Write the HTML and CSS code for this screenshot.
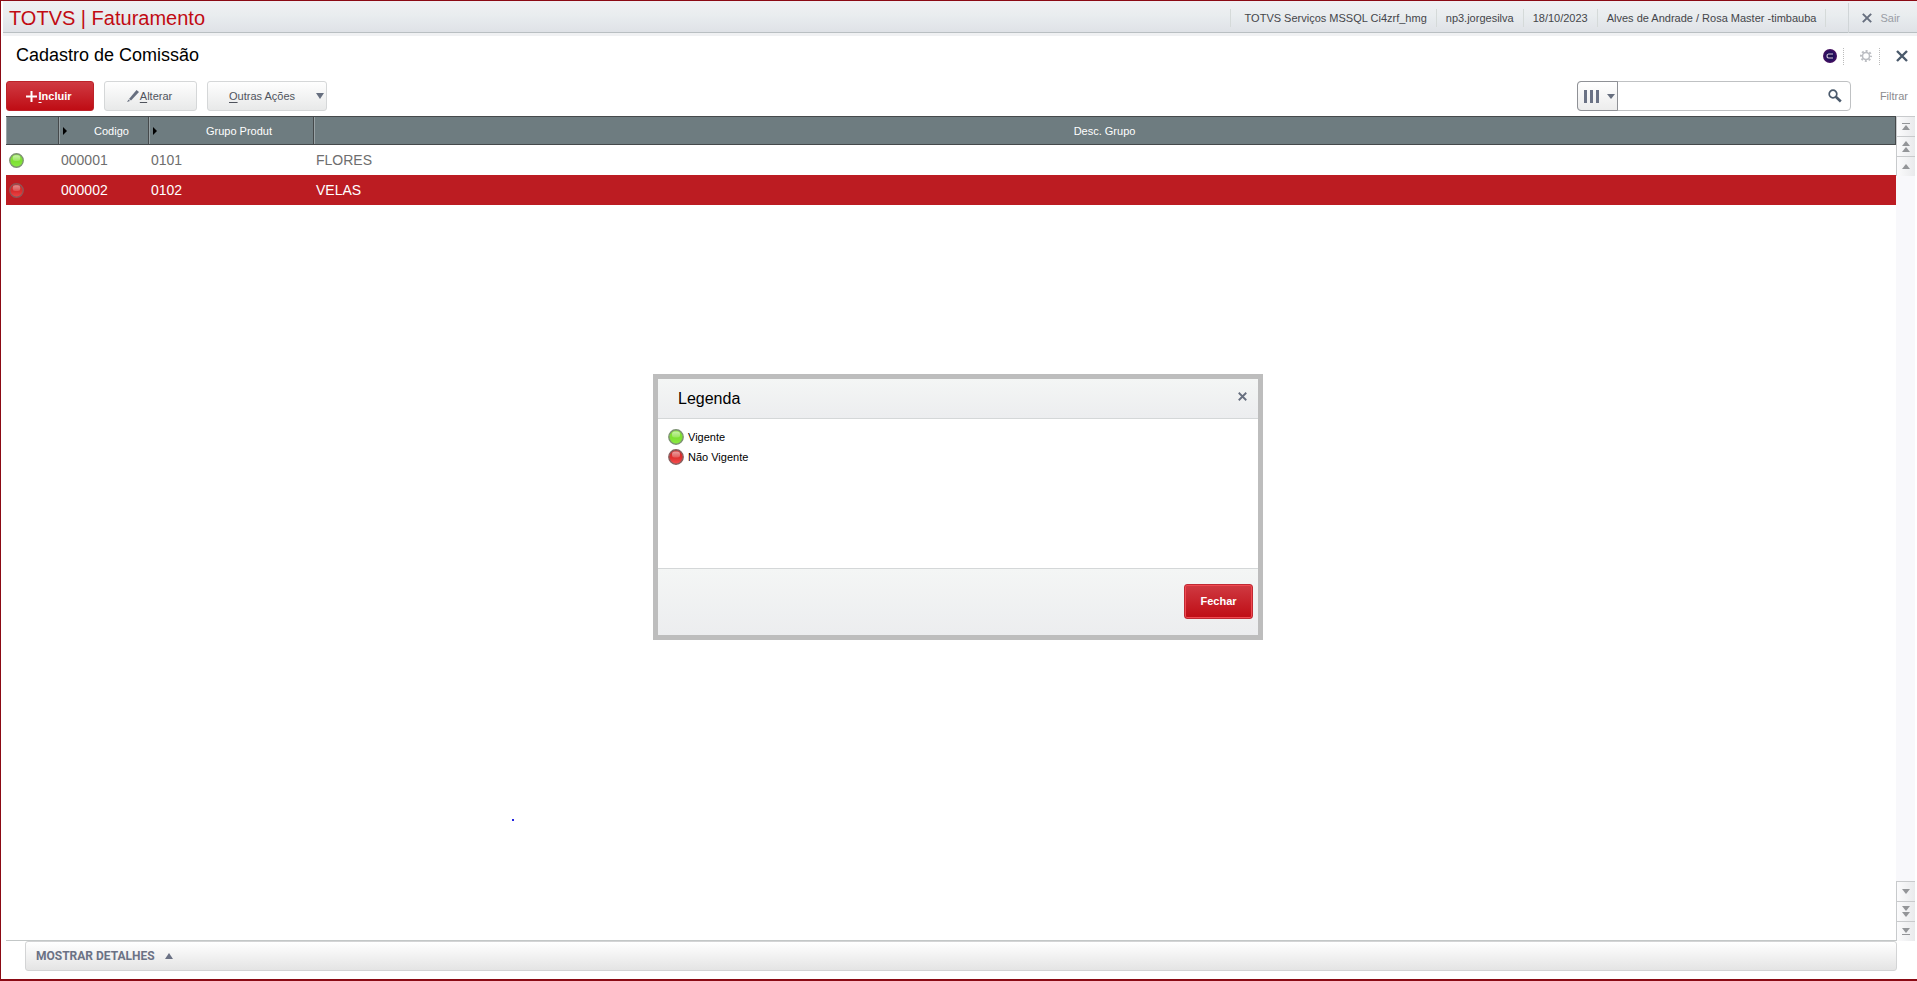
FILE: index.html
```html
<!DOCTYPE html>
<html lang="pt-BR">
<head>
<meta charset="utf-8">
<title>TOTVS | Faturamento</title>
<link rel="stylesheet" href="styles.css">
</head>
<body>
<svg class="defs" aria-hidden="true">
  <defs>
    <linearGradient id="green" x1="0" y1="0" x2="0" y2="1"><stop offset="0" stop-color="#84e03a"/><stop offset=".55" stop-color="#7ee032"/><stop offset="1" stop-color="#8aea44"/></linearGradient>
    <linearGradient id="red" x1="0" y1="0" x2="0" y2="1"><stop offset="0" stop-color="#c92a2a"/><stop offset=".55" stop-color="#e03030"/><stop offset="1" stop-color="#f45050"/></linearGradient>
    <linearGradient id="shine" x1="0" y1="0" x2="0" y2="1"><stop offset="0" stop-color="#fff" stop-opacity=".55"/><stop offset="1" stop-color="#fff" stop-opacity=".2"/></linearGradient>
    <radialGradient id="orb"><stop offset="0" stop-color="#1c1248"/><stop offset=".6" stop-color="#241060"/><stop offset="1" stop-color="#4a1060"/></radialGradient>
    <symbol id="ball-green" viewBox="0 0 16 16"><circle cx="8" cy="8" r="7.200" fill="url(#green)" stroke="#7d9173" stroke-width="1.4"/><rect x="4" y="2.5" width="8" height="6" rx="2.5" fill="url(#shine)"/></symbol>
    <symbol id="ball-red" viewBox="0 0 16 16"><circle cx="8" cy="8" r="7.200" fill="url(#red)" stroke="#876060" stroke-width="1.4"/><rect x="4" y="2.5" width="8" height="6" rx="2.5" fill="url(#shine)"/></symbol>
    <symbol id="cross" viewBox="0 0 12 12"><path d="M1 1l10 10M11 1L1 11" fill="none" stroke="currentColor" stroke-width="2.4"/></symbol>
    <symbol id="up" viewBox="0 0 8 5"><path d="M4 0l4 5H0z" fill="currentColor"/></symbol>
    <symbol id="down" viewBox="0 0 8 5"><path d="M0 0h8L4 5z" fill="currentColor"/></symbol>
  </defs>
</svg>

<div class="app">
  <header class="topbar">
    <h1 class="brand">TOTVS | Faturamento</h1>
    <ul class="session">
      <li>TOTVS Serviços MSSQL Ci4zrf_hmg</li>
      <li>np3.jorgesilva</li>
      <li>18/10/2023</li>
      <li>Alves de Andrade / Rosa Master -timbauba</li>
    </ul>
    <button class="logout" type="button"><svg><use href="#cross"/></svg>Sair</button>
  </header>

  <div class="heading">
    <h2>Cadastro de Comissão</h2>
    <div class="tools">
      <button type="button" aria-label="Assistente"><svg width="14" height="14" viewBox="0 0 14 14"><circle cx="7" cy="7" r="7" fill="url(#orb)"/><path d="M10 5H5.500Q4 5 4 7t1.500 2H10" fill="none" stroke="#d9c8dc" stroke-width="1.200"/></svg></button>
      <button type="button" aria-label="Configurações"><svg width="12" height="12" viewBox="0 0 12 12" fill="none" stroke="#bbbdc2"><circle cx="6" cy="6" r="3.500" stroke-width="1.500"/><circle cx="6" cy="6" r="5" stroke-width="2" stroke-dasharray="2 1.927" stroke-dashoffset="1"/></svg></button>
      <button type="button" aria-label="Fechar"><svg width="12" height="12"><use href="#cross"/></svg></button>
    </div>
  </div>

  <div class="toolbar">
    <button class="btn primary" type="button"><svg width="11" height="11" viewBox="0 0 11 11"><path d="M5.500 0v11M0 5.500h11" stroke="#fff" stroke-width="2"/></svg><span><u>I</u>ncluir</span></button>
    <button class="btn edit" type="button"><svg width="12" height="12" viewBox="0 0 12 12"><path d="M9.500 0L12 2 4 10.500 2 9z" fill="#676f7f"/><path d="M1.500 9.500l1.500 1.500-3 1z" fill="#676f7f"/></svg><span><u>A</u>lterar</span></button>
    <button class="btn menu" type="button"><span><u>O</u>utras Ações</span><svg width="8" height="6" viewBox="0 0 8 5" preserveAspectRatio="none"><path d="M0 0h8L4 5z" fill="#676f7f"/></svg></button>
    <form class="search">
      <button class="columns" type="button" aria-label="Colunas"><svg width="15" height="13" viewBox="0 0 15 13"><path d="M0 0h3v13H0zM6 0h3v13H6zM12 0h3v13h-3z" fill="#6b7285"/></svg><svg width="8" height="5"><use href="#down"/></svg></button>
      <input type="text" aria-label="Pesquisar">
      <button class="find" type="submit" aria-label="Buscar"><svg width="14" height="14" viewBox="0 0 14 14" fill="none" stroke="#4b5a6c"><circle cx="5" cy="5" r="3.800" stroke-width="1.700"/><path d="M7.800 7.800l5 4.700" stroke-width="2.600"/></svg></button>
    </form>
    <a class="filter" href="#">Filtrar</a>
  </div>

  <main class="grid">
    <div class="records">
      <table>
        <colgroup><col class="c-status"><col class="c-code"><col class="c-group"><col></colgroup>
        <thead><tr>
          <th aria-label="Situação"></th>
          <th><div class="sort"><i></i><span>Codigo</span></div></th>
          <th><div class="sort"><i></i><span>Grupo Produt</span></div></th>
          <th>Desc. Grupo</th>
        </tr></thead>
        <tbody>
          <tr><td><svg class="ball"><use href="#ball-green"/></svg></td><td>000001</td><td>0101</td><td>FLORES</td></tr>
          <tr class="selected"><td><svg class="ball"><use href="#ball-red"/></svg></td><td>000002</td><td>0102</td><td>VELAS</td></tr>
        </tbody>
      </table>
    </div>
    <div class="pager">
      <button type="button" aria-label="Primeiro"><b></b><svg><use href="#up"/></svg></button>
      <button type="button" aria-label="Página anterior"><svg><use href="#up"/></svg><svg><use href="#up"/></svg></button>
      <button type="button" aria-label="Anterior"><svg><use href="#up"/></svg></button>
      <div class="track"></div>
      <button type="button" aria-label="Próximo"><svg><use href="#down"/></svg></button>
      <button type="button" aria-label="Próxima página"><svg><use href="#down"/></svg><svg><use href="#down"/></svg></button>
      <button type="button" aria-label="Último"><svg><use href="#down"/></svg><b></b></button>
    </div>
  </main>

  <button class="details" type="button">MOSTRAR DETALHES<svg width="8" height="6" viewBox="0 0 8 5" preserveAspectRatio="none"><path d="M4 0l4 5H0z" fill="#6b7285"/></svg></button>
  <div class="mark"></div>

  <section class="dialog" role="dialog" aria-labelledby="legend-title">
    <header><h3 id="legend-title">Legenda</h3><button type="button" aria-label="Fechar legenda"><svg width="9" height="9"><use href="#cross"/></svg></button></header>
    <ul>
      <li><svg><use href="#ball-green"/></svg>Vigente</li>
      <li><svg><use href="#ball-red"/></svg>Não Vigente</li>
    </ul>
    <footer><button type="button">Fechar</button></footer>
  </section>
</div>
</body>
</html>
```
FILE: styles.css
```css
* { box-sizing: border-box; }
body { margin: 0; font: 11px/14px "Liberation Sans", Arial, sans-serif; color: #000; background: #fff; }
button { margin: 0; padding: 0; border: 0; background: none; font: inherit; color: inherit; }
h1, h2, h3, ul { margin: 0; padding: 0; font-weight: normal; list-style: none; }
svg { display: block; flex: none; }
.defs { position: absolute; width: 0; height: 0; }

.app { position: relative; display: flex; flex-direction: column; min-height: 100vh; border: 1px solid #8b0a14; border-width: 1px 0 2px 1px; padding-bottom: 8px; }

.topbar { display: flex; align-items: stretch; height: 35px; margin-left: 2px; padding: 2px 0 3px; background: linear-gradient(#f0f0f3, #e9edef 40%, #dfe2e7 31px, #b9bfc2 31px, #b9bfc2 32px, #f0f1f3 32px); }
.brand { flex: 1; padding-left: 6px; font-size: 20px; line-height: 30px; color: #c10b13; }
.session { display: flex; align-items: center; color: #45464a; margin-right: 22px; }
.session li { padding: 2px 9px; border-right: 1px solid #d5dad9; }
.session li:first-child { padding-left: 14px; border-left: 1px solid #d5dad9; }
.logout { display: flex; align-items: center; gap: 8px; padding: 0 17px 0 13px; border-left: 1px solid #d0d5d7; color: #9a9da5; }
.logout svg { width: 10px; height: 10px; color: #676f7f; }

.heading { display: flex; align-items: center; justify-content: space-between; height: 40px; padding: 0 9px 0 15px; }
.heading h2 { font-size: 18px; line-height: 20px; padding-bottom: 2px; }
.tools { display: flex; align-items: center; color: #4b5a6c; }
.tools button { display: flex; align-items: center; height: 17px; }
.tools button:nth-child(-n+2) { border-right: 1px dotted #bbb; padding-right: 6px; margin-right: 16px; }
.tools button:nth-child(2) { padding-right: 7px; }

.toolbar { display: flex; align-items: center; height: 40px; padding: 0 9px 0 5px; }
.btn { display: flex; align-items: center; justify-content: center; height: 30px; border: 1px solid #d5d7d8; border-radius: 3px; background: linear-gradient(#fefefe, #e8e9e9); color: #50545d; margin-right: 10px; gap: 1px; }
.btn u { text-underline-offset: 2px; }
.primary { width: 88px; padding-right: 2px; border-color: #bd2229; background: linear-gradient(#cf3a42, #bf0c14); color: #fff; font-weight: bold; }
.edit { width: 93px; padding-right: 2px; }
.menu { width: 120px; justify-content: space-between; padding: 0 2px 0 21px; }
.search { display: flex; width: 274px; height: 30px; margin-left: auto; border: 1px solid #bfc1c3; border-radius: 4px; }
.columns { display: flex; align-items: center; gap: 8px; width: 41px; margin: -1px; padding-left: 6px; border: 1px solid #8f9196; border-radius: 4px 0 0 4px; background: linear-gradient(#fff, #ececec); color: #676f7f; }
.search input { flex: 1; min-width: 0; border: 0; padding: 0 8px; outline: 0; font: inherit; background: none; }
.find { padding: 0 8px; }
.filter { width: 57px; text-align: right; color: #8b8b8f; text-decoration: none; }

.grid { flex: 1; display: flex; margin: 0 2px 0 5px; }
.records { flex: 1; border-bottom: 1px solid #c3c7c7; }
table { width: 100%; table-layout: fixed; border-collapse: separate; border-spacing: 0; }
.c-status { width: 53px; }
.c-code { width: 90px; }
.c-group { width: 165px; }
th { height: 29px; padding: 0; background: #6e7c80; color: #fff; font-weight: normal; border: solid #45494b; border-width: 1px 1px 1px 0; box-shadow: inset 1px 0 #99a3a6; }
.sort { display: flex; align-items: center; }
.sort i { margin-left: 4px; border: solid transparent; border-width: 4px 0 4px 4px; border-left-color: #000; }
.sort span { flex: 1; text-align: center; padding-left: 8px; }
td { height: 30px; padding: 0 2px; font-size: 14px; line-height: 16px; color: #6e6e6e; }
.selected td { background: #bc1c22; color: #fff; }
.ball { width: 15px; height: 15px; margin-left: 1px; }
.selected .ball { opacity: .85; }

.pager { display: flex; flex-direction: column; width: 19px; background: #f8f8fb; }
.pager button { display: flex; flex-direction: column; align-items: center; justify-content: center; gap: 1px; height: 20px; border: solid #c8cacc; border-width: 1px 0 0 1px; background: linear-gradient(90deg, #fbfbfc, #e9eaec); color: #939598; }
.pager svg { width: 8px; height: 5px; }
.pager b { width: 8px; height: 1px; background: #939598; }
.track { flex: 1; }

.details { display: flex; align-items: center; gap: 10px; height: 30px; margin: 0 20px 0 24px; padding-left: 10px; border: 1px solid #d3d4d5; border-radius: 3px; background: linear-gradient(#fff, #e4e4e4); color: #6b7285; font: bold 12px/16px Roboto, sans-serif; }

/* stray cursor dot left on the canvas */
.mark { position: absolute; left: 511px; top: 818px; width: 2px; height: 2px; background: #2323e0; }

.dialog { position: absolute; left: 50%; top: 373px; width: 610px; margin-left: -306px; border: 5px solid #bdbdbd; background: #fff; }
.dialog header { display: flex; justify-content: space-between; height: 40px; padding: 0 11px 0 20px; border-bottom: 1px solid #d4d7d8; background: linear-gradient(#f4f6f5, #ecedef); }
.dialog h3 { font-size: 16px; line-height: 40px; }
.dialog header button { height: 35px; color: #676f7f; }
.dialog ul { display: flex; flex-direction: column; gap: 4px; height: 149px; padding: 10px; }
.dialog li { display: flex; align-items: center; gap: 4px; height: 16px; }
.dialog li svg { width: 16px; height: 16px; }
.dialog footer { display: flex; justify-content: flex-end; align-items: center; height: 67px; padding: 0 5px 2px 0; border-top: 1px solid #d4d7d8; background: linear-gradient(#f4f6f5, #ecedef); }
.dialog footer button { width: 69px; height: 35px; border: 1px solid #c02a33; border-radius: 3px; box-shadow: inset 0 0 0 1px #f04a52; background: linear-gradient(#cf3a42, #bf0c14); color: #fff; font-weight: bold; }
```
